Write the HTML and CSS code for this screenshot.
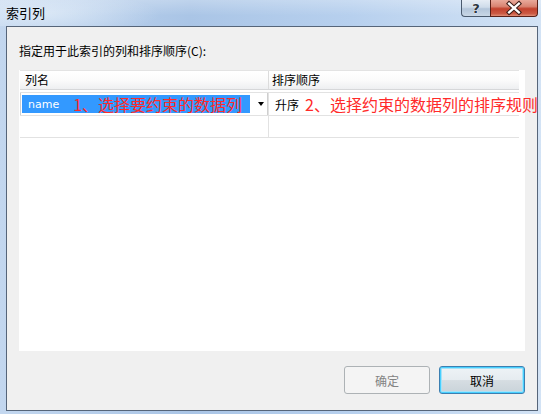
FILE: index.html
```html
<!DOCTYPE html>
<html lang="zh-CN">
<head>
<meta charset="utf-8">
<title>索引列</title>
<link rel="stylesheet" href="styles.css">
</head>
<body>
<div class="window">
  <div class="titlebar">
    <span class="title">索引列</span>
    <div class="caption-btns">
      <div class="cap-btn help">
        <svg width="28" height="16" viewBox="0 0 28 16">
          <text x="14" y="13" text-anchor="middle" class="help-q">?</text>
        </svg>
      </div>
      <div class="cap-btn close">
        <svg width="47" height="16" viewBox="0 0 47 16">
          <path d="M18.5 3.5 L28.5 12.5 M28.5 3.5 L18.5 12.5" stroke="#3b1c17" stroke-width="4.5" stroke-linecap="square" fill="none"/>
          <path d="M18.5 3.5 L28.5 12.5 M28.5 3.5 L18.5 12.5" stroke="#ffffff" stroke-width="2.4" stroke-linecap="square" fill="none"/>
        </svg>
      </div>
    </div>
  </div>
  <div class="client">
    <div class="label">指定用于此索引的列和排序顺序(C):</div>
    <div class="grid">
      <div class="grid-head">
        <div class="hc c1">列名</div>
        <div class="hc c2">排序顺序</div>
      </div>
      <div class="row first">
        <div class="cell c1 combo">
          <span class="sel"><span class="name">name</span><span class="note n1">1、选择要约束的数据列</span></span>
          <span class="arrow"></span>
        </div>
        <div class="cell c2"><span class="asc">升序</span><span class="note n2">2、选择约束的数据列的排序规则</span></div>
      </div>
      <div class="row">
        <div class="cell c1"></div>
        <div class="cell c2"></div>
      </div>
    </div>
    <div class="actions">
      <button class="btn" disabled>确定</button>
      <button class="btn default">取消</button>
    </div>
  </div>
</div>
</body>
</html>
```

FILE: styles.css
```css
* { box-sizing: border-box; }
html, body { margin: 0; padding: 0; }
body {
  width: 541px;
  height: 414px;
  overflow: hidden;
  font-family: "Noto Sans CJK SC", "Liberation Sans", sans-serif;
  font-size: 12px;
  color: #000;
}
.window {
  width: 541px;
  height: 414px;
  display: flex;
  flex-direction: column;
  background: linear-gradient(to right, #c3d7ef 0%, #aac5e6 35%, #b7d0ee 65%, #d3e3f5 100%);
}
.titlebar {
  height: 26px;
  display: flex;
  align-items: flex-start;
  background:
    linear-gradient(to bottom, rgba(255,255,255,0.25) 0%, rgba(255,255,255,0) 60%),
    radial-gradient(ellipse 120px 22px at 40px 14px, rgba(230,240,250,0.7), rgba(230,240,250,0) 100%);
}
.title {
  margin-left: 6px;
  margin-top: 5px;
  font-size: 13px;
  line-height: 16px;
  color: #000;
}
.caption-btns {
  margin-left: auto;
  margin-right: 3px;
  display: flex;
}
.cap-btn {
  height: 17px;
  border: 1px solid #4a5a6e;
  border-top: none;
  display: flex;
  align-items: center;
  justify-content: center;
}
.cap-btn.help {
  width: 29px;
  border-radius: 0 0 0 4px;
  border-right: none;
  background: linear-gradient(to bottom, #e6edf5 0%, #cfdcea 45%, #b3c5da 55%, #c9d7e6 100%);
}
.help-q {
  font-family: "DejaVu Sans", sans-serif;
  font-weight: bold;
  font-size: 13px;
  fill: #2b3440;
  stroke: #ffffff;
  stroke-width: 0.6px;
  paint-order: stroke;
}
.cap-btn.close {
  width: 48px;
  border-color: #5a2018;
  border-radius: 0 0 4px 0;
  background: linear-gradient(to bottom, #e9a99b 0%, #d98472 40%, #c2412d 55%, #cc5a44 85%, #e08f78 100%);
}
.client {
  flex: 1;
  margin: 0 3px 3px 6px;
  border: 1px solid #566579;
  background: #f0f0f0;
  padding: 16px 12px 0 12px;
  display: flex;
  flex-direction: column;
}
.label {
  line-height: 16px;
  height: 16px;
  font-size: 12px;
}
.grid {
  margin-top: 11px;
  height: 281px;
  background: #ffffff;
  padding: 0 6px 0 1px;
}
.grid-head {
  display: flex;
  height: 20px;
  background: linear-gradient(to bottom, #ffffff 0%, #fbfbfb 50%, #eeeff1 100%);
  border-top: 1px solid #e3e3e3;
  border-bottom: 1px solid #d6d7d9;
}
.hc {
  line-height: 18px;
  padding-left: 5px;
}
.c1 { width: 248px; }
.c2 { width: 250px; }
.hc.c2 {
  border-left: 1px solid #dcdcdc;
  padding-left: 3px;
}
.row {
  display: flex;
  height: 22px;
  border-bottom: 1px solid #e2e2e2;
}
.row.first {
  margin-top: 2px;
  height: 24px;
  border-top: 1px solid #e2e2e2;
}
.cell {
  display: flex;
  align-items: center;
  white-space: nowrap;
}
.cell.c2 {
  border-left: 1px solid #e2e2e2;
  padding-left: 6px;
}
.combo {
  border: 1px solid #cfcfcf;
  border-top: none;
  border-bottom: none;
  padding-left: 1px;
}
.sel {
  width: 228px;
  height: 18px;
  background: #3399ff;
  display: flex;
  align-items: center;
  padding-left: 6px;
  overflow: visible;
}
.name {
  color: #ffffff;
  font-family: "DejaVu Sans", sans-serif;
  font-size: 11px;
}
.note {
  color: #ff2a2a;
  font-size: 16px;
  line-height: 18px;
}
.n1 { margin-left: 14px; }
.n2 { margin-left: 6px; position: relative; z-index: 1; }
.arrow {
  margin-left: 8px;
  width: 0;
  height: 0;
  border-left: 3.5px solid transparent;
  border-right: 3.5px solid transparent;
  border-top: 4px solid #000;
}
.asc { font-size: 12px; }
.actions {
  display: flex;
  justify-content: flex-end;
  gap: 9px;
  margin-top: 15px;
}
.btn {
  width: 86px;
  height: 28px;
  border-radius: 3px;
  font-family: "Noto Sans CJK SC", sans-serif;
  font-size: 12px;
  padding: 0;
  border: 1px solid #707070;
  background: linear-gradient(to bottom, #f2f2f2 0%, #ebebeb 48%, #dddddd 52%, #cfcfcf 100%);
  color: #000;
}
.btn:disabled {
  border-color: #adb2b5;
  background: #f4f4f4;
  color: #838383;
}
.btn.default {
  border-color: #3c7fb1;
  box-shadow: inset 0 0 0 1px #48d0ff, inset 0 0 0 2px #a6e2f8;
  background: linear-gradient(to bottom, #eef3f6 0%, #e6ecf0 48%, #d6dde2 52%, #c9d3d9 100%);
}
```
